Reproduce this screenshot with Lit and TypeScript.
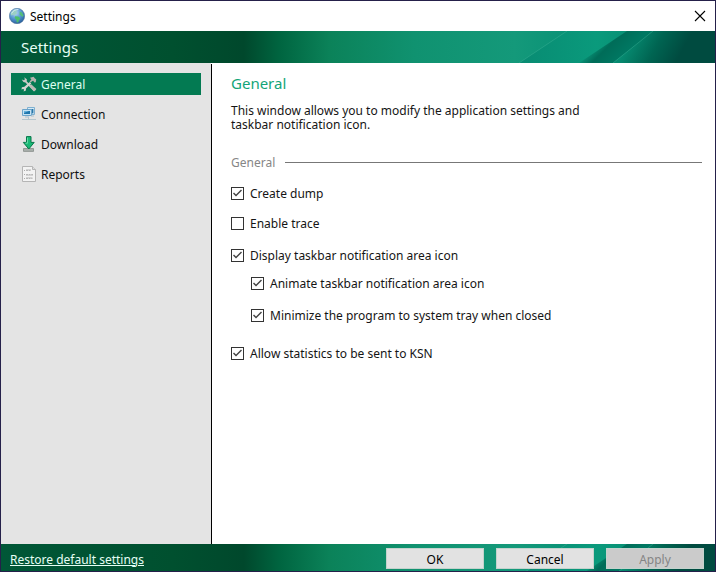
import { LitElement, html, css, svg } from "lit";
import { customElement, state } from "lit/decorators.js";
import { classMap } from "lit/directives/class-map.js";

const globeIcon = html`<svg class="globe" viewBox="0 0 16 16" aria-hidden="true">
  <defs>
    <radialGradient id="sea" cx="0.4" cy="0.3" r="0.75">
      <stop offset="0" stop-color="#b9d9f5" />
      <stop offset="0.5" stop-color="#5799d2" />
      <stop offset="1" stop-color="#245a98" />
    </radialGradient>
  </defs>
  <circle cx="8" cy="8" r="7.7" fill="url(#sea)" stroke="#46688f" stroke-width="0.5" />
  <path d="M3 3.2 5.5 1.6 8.6 2.4 7.2 4 8.4 5.2 6.2 6.4 6 8 4.2 6.8 2 7.4 1.6 5.4Z" fill="#9bd0c4" />
  <path d="M6.2 8.2 9.4 8.6 11.4 10.4 9.8 12.2 9.4 14.2 7.8 14.4 7.4 11.8 5.6 10Z" fill="#4cc06a" />
  <path d="M10.6 3.4 13 4.4 14.4 7.2 13.6 9 11.8 7.6 10.6 6.2Z" fill="#55bd78" />
  <path d="M2.6 5.4Q4.6 1.4 9.4 1.5" stroke="#e4f2fc" stroke-width="0.8" fill="none" />
</svg>`;

const icons = {
  tools: svg`<path d="M3.2 1.2 5.8 3.2V5.4L15 13.4 13 15.6 4.4 6.6 2.4 6 .7 3.5 3 4.2 3.9 3.2Z" fill="#c9c9c5"/>
    <path d="M9 1.8 12.6.8 14 2.4 15.2 3.2 14.8 6.2 13.4 6.4 12.2 4.8 11 5.2 9.8 6.6 8.6 5.6 10.4 3.6Z" fill="#b3b3ae"/>
    <path d="M8.8 6 10.3 7.4 5 12.4 4.9 14.6 2.6 15.6 3.1 13.6 2 12.9.4 13.6.9 11.3 3.4 10.7Z" fill="#d3d3cf"/>
    <path d="M10.2 8.2 15.4 13 13.6 15.3 8.8 10.2Z" fill="#b9b9b4"/>`,
  network: svg`<path d="M6.5 1.5H13.5V8.5H6.5Z" fill="#d5eaf6" stroke="#7fb0d0"/>
    <path d="M9 3H12.4V7.4H9Z" fill="#2675a8"/>
    <path d="M1.5 3.5H10.5V9.5H1.5Z" fill="#c5e2f2" stroke="#6ca4ca"/>
    <path d="M3 5H9V8H3Z" fill="#1f76ad"/><path d="M3 5H8L3 7Z" fill="#62b0da"/>
    <path d="M4 11H8M10 10H13" stroke="#a9bfcc" fill="none"/>
    <path d="M1 13.5H15M7.5 11V13" stroke="#b4c6cf" fill="none"/>`,
  arrow: svg`<path d="M2.5 12.5H12.5V15.4H2.5Z" fill="#a9b0ac" stroke="#858c88" stroke-width=".8"/>
    <path d="M5.5.6H10V6.4H13.2L7.8 13 2.3 6.4H5.5Z" fill="#18b875" stroke="#08764a"/>
    <path d="M6.5 1.6V7.2H4.5" stroke="#63dba6" fill="none"/>`,
  report: svg`<path d="M1.5.5H11.5L14.5 3.5V15.5H1.5Z" fill="#f3f3f3" stroke="#b5b5b5"/>
    <path d="M11.5.5V3.5H14.5" fill="#dedede" stroke="#b5b5b5"/>
    <path d="M5 4.5H10M5 8.5H12M5 12.5H11.5" stroke="#b8b8b8" stroke-dasharray="2 .6" fill="none"/>
    <path d="M5 3.5H10M5 9.5H12M5 11.5H11.5" stroke="#d4d4d4" fill="none"/>
    <path d="M3 4.5H4M3 8.5H4M3 12.5H4" stroke="#acacac"/>`,
};

const pages = [
  { name: "General", icon: icons.tools },
  { name: "Connection", icon: icons.network },
  { name: "Download", icon: icons.arrow },
  { name: "Reports", icon: icons.report },
];

@customElement("app-root")
export class AppRoot extends LitElement {
  @state() private page = "General";

  static styles = css`
    :host {
      display: block;
      font: 12px/14px "Noto Sans", "Open Sans", sans-serif;
      color: #151515;
    }
    * { box-sizing: border-box; }
    .window {
      display: flex;
      flex-direction: column;
      min-height: 100vh;
      border: 1px solid #25204a;
      background: #fff;
    }
    .titlebar {
      display: flex;
      align-items: center;
      gap: 5px;
      height: 30px;
      padding: 0 8px;
      color: #000;
    }
    .globe { width: 16px; height: 16px; }
    .close {
      display: flex;
      margin-left: auto;
      padding: 0;
      border: 0;
      background: none;
    }
    .close svg { width: 14px; height: 14px; }
    .label { padding-top: 2px; }
    .banner {
      position: relative;
      display: flex;
      align-items: center;
      overflow: hidden;
      background: linear-gradient(90deg, #005737 0, #00502f 24%, #00482c 34%, #006540 39%, #0b8259 46%, #109270 58%, #14997a 72%, #028d74 85%, #006652 92%, #004b40 100%);
      color: #e6fff5;
    }
    .sheen {
      position: absolute;
      top: 0;
      right: 0;
      width: 204px;
      height: 32px;
    }
    .banner > :not(.sheen) { position: relative; }
    .head { height: 32px; padding: 0 20px; }
    h1, h2, h3, p { margin: 0; font-weight: 400; }
    h1 { font-size: 15px; line-height: 20px; }
    .body { display: flex; flex: 1; }
    nav {
      display: flex;
      flex-direction: column;
      gap: 8px;
      width: 210px;
      padding: 10px;
      background: #e4e4e4;
    }
    .item {
      display: flex;
      align-items: center;
      gap: 4px;
      height: 22px;
      padding: 0 10px;
      border: 0;
      background: none;
      font: inherit;
      color: #101010;
    }
    .item svg { width: 16px; height: 16px; }
    .item.current { background: #037a52; color: #dcfff0; }
    main {
      flex: 1;
      margin-top: 1px;
      padding: 9px 13px 9px 19px;
      border-left: 1px solid #000;
    }
    h2 { font-size: 15px; line-height: 20px; color: #12a578; }
    .intro { max-width: 360px; margin-top: 11px; }
    .group {
      display: flex;
      align-items: center;
      gap: 10px;
      margin-top: 22px;
    }
    h3 { font-size: 12px; line-height: 14px; color: #868686; }
    .rule { flex: 1; height: 1px; background: #777; }
    .options { display: grid; gap: 10px; margin-top: 13px; }
    .set { display: grid; gap: 12px; padding-left: 20px; }
    .tray { display: grid; gap: 8px; margin: 2px 0 8px; }
    .check {
      display: flex;
      align-items: center;
      gap: 6px;
      height: 20px;
    }
    .check input {
      display: grid;
      appearance: none;
      width: 13px;
      height: 13px;
      margin: 0;
      border: 1px solid #333;
      background: #fff;
    }
    .check input:checked::before {
      content: "";
      width: 11px;
      height: 11px;
      background: #444;
      clip-path: polygon(1px 6px, 2px 5px, 4px 7px, 9px 2px, 10px 3px, 4px 9px);
    }
    .foot { height: 27px; padding: 2px 11px 0 9px; }
    .foot a { color: #e6fff5; }
    .actions { display: flex; gap: 12px; margin-left: auto; }
    .actions button {
      width: 98px;
      height: 21px;
      padding: 2px 0 0;
      border: 1px solid #c4d3cd;
      background: #e2e2e2;
      font: inherit;
      color: #000;
    }
    .actions button:disabled { background: #cbcbcb; color: #858585; }
  `;

  private sheen() {
    return html`<svg class="sheen" viewBox="0 0 204 32" aria-hidden="true">
      <defs>
        <linearGradient id="a" x1="0" x2="1"><stop offset="0" stop-color="#088b72" /><stop offset=".7" stop-color="#0a9a7c" /><stop offset="1" stop-color="#088f74" /></linearGradient>
        <linearGradient id="b" gradientUnits="userSpaceOnUse" x1="88" y1="12" x2="106" y2="30"><stop offset="0" stop-color="#088f74" /><stop offset=".35" stop-color="#006c58" /><stop offset="1" stop-color="#007862" /></linearGradient>
        <linearGradient id="c" gradientUnits="userSpaceOnUse" x1="116" y1="16" x2="160" y2="40"><stop offset="0" stop-color="#068a70" /><stop offset=".5" stop-color="#006552" /><stop offset="1" stop-color="#004b40" /></linearGradient>
      </defs>
      <path d="M8 32 56 0H120L72 32Z" fill="url(#a)" />
      <path d="M68 32 116 0H142L102 32Z" fill="url(#b)" />
      <path d="M102 32 142 0H204V32Z" fill="url(#c)" />
      <path d="M8 32 56 0M102 32 142 0" stroke="#43b79a" stroke-opacity=".5" stroke-width=".8" fill="none" />
    </svg>`;
  }

  private check(label: string, on = true) {
    return html`<label class="check"><input type="checkbox" .checked=${on} /><span class="label">${label}</span></label>`;
  }

  render() {
    return html`<div class="window">
      <div class="titlebar">
        ${globeIcon}<span class="label">Settings</span>
        <button class="close" aria-label="Close">
          <svg viewBox="0 0 14 14"><path d="M2 2 12 12M12 2 2 12" stroke="#000" stroke-width="1.1" fill="none" /></svg>
        </button>
      </div>
      <header class="banner head">${this.sheen()}<h1>Settings</h1></header>
      <div class="body">
        <nav>
          ${pages.map(
            (p) => html`<button
              class=${classMap({ item: true, current: p.name === this.page })}
              @click=${() => (this.page = p.name)}
            ><svg viewBox="0 0 16 16" aria-hidden="true">${p.icon}</svg><span class="label">${p.name}</span></button>`
          )}
        </nav>
        <main>
          <h2>General</h2>
          <p class="intro">This window allows you to modify the application settings and taskbar notification icon.</p>
          <div class="group"><h3 class="label">General</h3><div class="rule"></div></div>
          <div class="options">
            ${this.check("Create dump")} ${this.check("Enable trace", false)}
            <div class="tray">
              ${this.check("Display taskbar notification area icon")}
              <div class="set">
                ${this.check("Animate taskbar notification area icon")}
                ${this.check("Minimize the program to system tray when closed")}
              </div>
            </div>
            ${this.check("Allow statistics to be sent to KSN")}
          </div>
        </main>
      </div>
      <footer class="banner foot">
        ${this.sheen()}
        <a class="label" href="#restore">Restore default settings</a>
        <div class="actions">
          <button>OK</button><button>Cancel</button><button disabled>Apply</button>
        </div>
      </footer>
    </div>`;
  }
}
